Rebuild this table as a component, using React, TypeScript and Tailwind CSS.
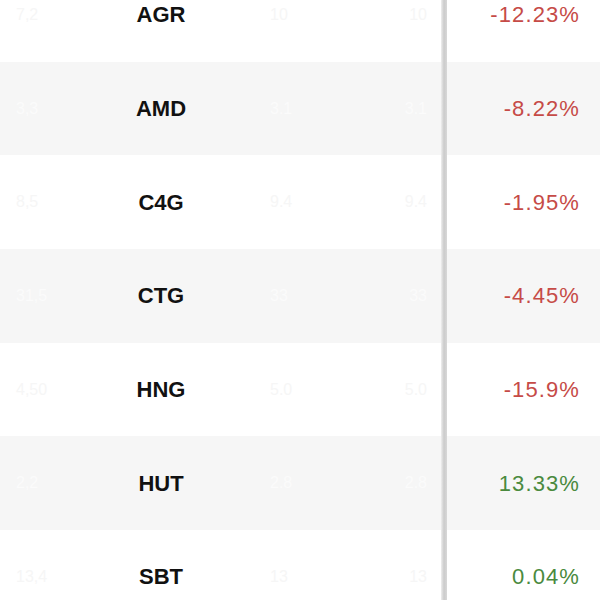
import React from 'react';

type Row = { ticker: string; change: string; up: boolean; a: string; b: string };

const rows: Row[] = [
  { ticker: 'AGR', change: '-12.23%', up: false, a: '7,2', b: '10' },
  { ticker: 'AMD', change: '-8.22%', up: false, a: '3,3', b: '3.1' },
  { ticker: 'C4G', change: '-1.95%', up: false, a: '8,5', b: '9.4' },
  { ticker: 'CTG', change: '-4.45%', up: false, a: '31,5', b: '33' },
  { ticker: 'HNG', change: '-15.9%', up: false, a: '4,50', b: '5.0' },
  { ticker: 'HUT', change: '13.33%', up: true, a: '2,2', b: '2.8' },
  { ticker: 'SBT', change: '0.04%', up: true, a: '13,4', b: '13' },
];

export default function App() {
  return (
    <div
      className="w-[600px] h-[600px] overflow-hidden bg-white"
      style={{ fontFamily: '"Liberation Sans", Arial, sans-serif' }}
    >
      <div className="flex -mt-[32px]">
        {/* scrolled part with the frozen ticker column */}
        <div className="w-[441px] flex flex-col">
          {rows.map((r, i) => (
            <div
              key={r.ticker}
              className={`h-[93.7px] flex items-center ${
                i % 2 === 1 ? 'bg-[#f6f6f6] text-[#fbfbfb]' : 'bg-white text-[#f6f6f6]'
              }`}
            >
              <div className="w-[72px] pl-[16px] text-[16px]">{r.a}</div>
              <div className="w-[178px] text-center text-[22px] font-bold text-[#111111]">{r.ticker}</div>
              <div className="flex-1 flex justify-between pl-[20px] pr-[14px] text-[16px]">
                <span>{r.b}</span>
                <span>{r.b}</span>
              </div>
            </div>
          ))}
        </div>

        {/* divider */}
        <div className="w-[6px] bg-linear-to-r from-[#eeeeee] via-[#cbcbcb] to-[#d8d8d8]" />

        {/* change column */}
        <div className="flex-1 flex flex-col">
          {rows.map((r, i) => (
            <div
              key={r.ticker}
              className={`h-[93.7px] flex items-center justify-end pr-[20px] text-[22px] tracking-[0.05em] ${
                i % 2 === 1 ? 'bg-[#f6f6f6]' : 'bg-white'
              } ${r.up ? 'text-[#4a8a3e]' : 'text-[#c64b47]'}`}
            >
              {r.change}
            </div>
          ))}
        </div>
      </div>
    </div>
  );
}
